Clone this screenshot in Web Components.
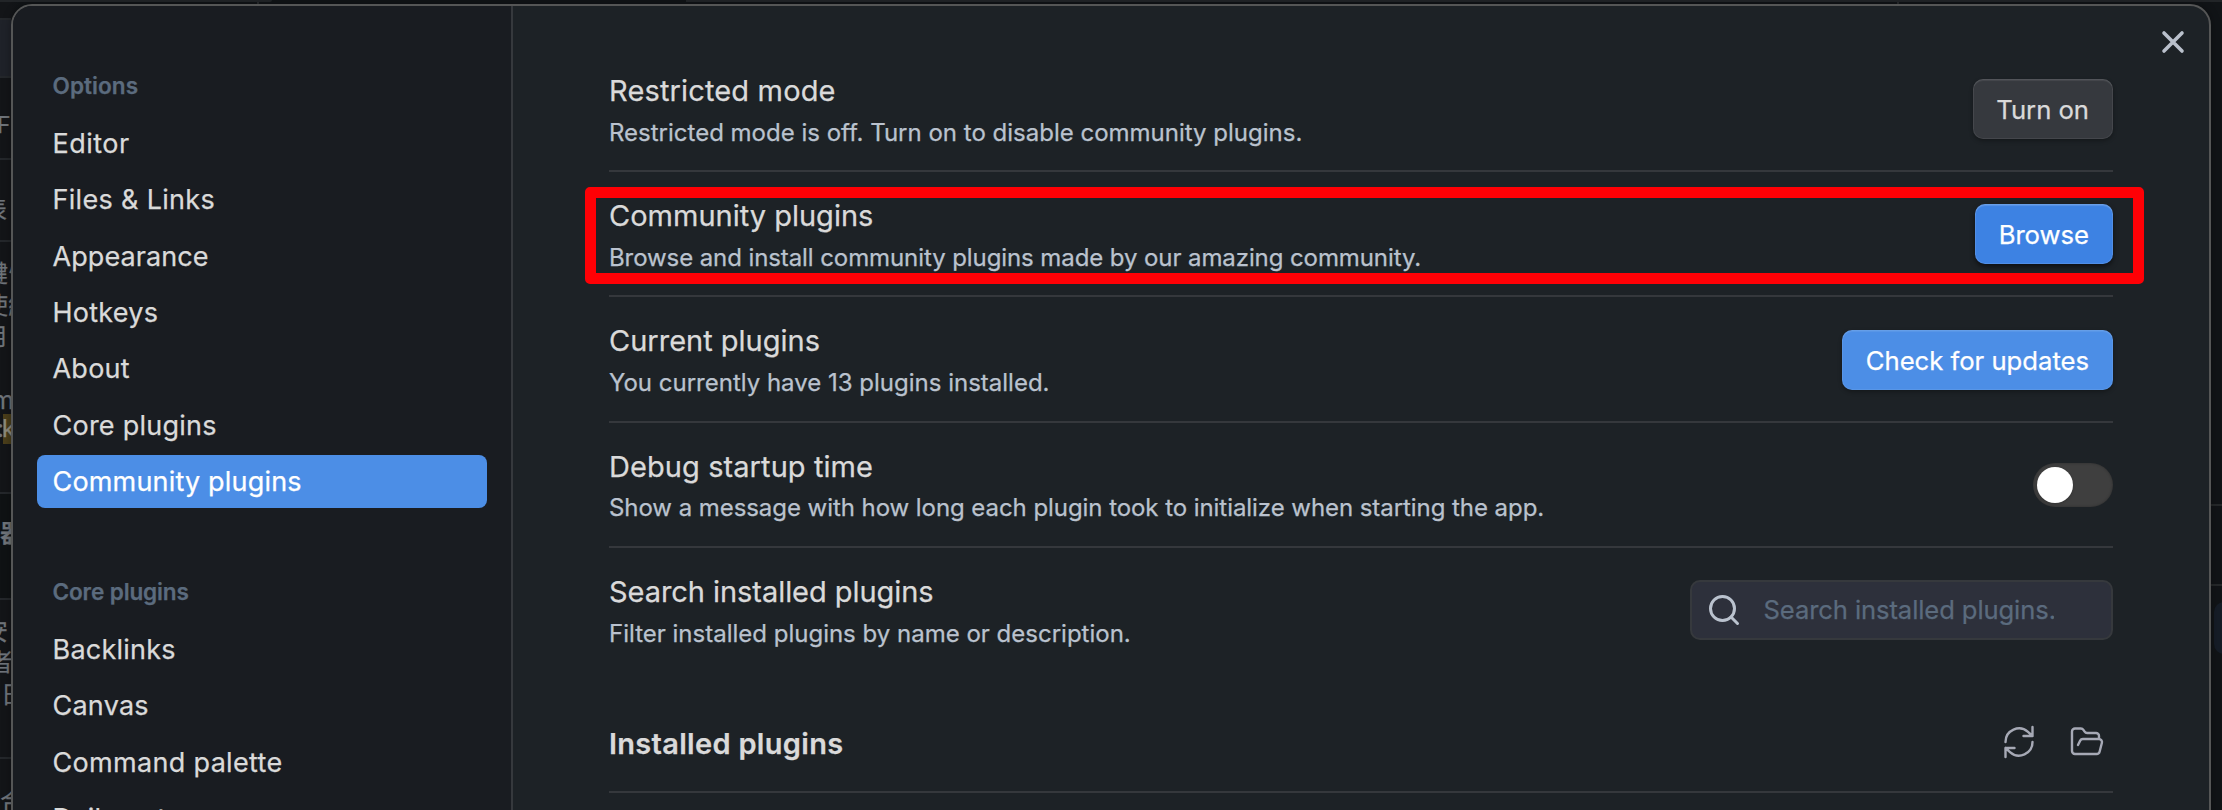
<!DOCTYPE html>
<html lang="en">
<head>
<meta charset="utf-8">
<title>Settings</title>
<style>
html,body{margin:0;height:810px;overflow:hidden;background:#111417}
body{font-family:Inter,"Noto Sans CJK TC",sans-serif;color:#dadada;-webkit-text-stroke:.25px currentColor}
</style>
</head>
<body>
<app-shell>
  <app-backdrop slot="backdrop"></app-backdrop>
  <settings-modal>
    <nav-group slot="nav" label="Options" style="--hls:.05px">
      <nav-item style="--ls:.5px">Editor</nav-item>
      <nav-item style="--ls:.32px">Files &amp; Links</nav-item>
      <nav-item style="--ls:.08px">Appearance</nav-item>
      <nav-item>Hotkeys</nav-item>
      <nav-item>About</nav-item>
      <nav-item>Core plugins</nav-item>
      <nav-item active style="--ls:.18px">Community plugins</nav-item>
    </nav-group>
    <nav-group slot="nav" label="Core plugins">
      <nav-item>Backlinks</nav-item>
      <nav-item>Canvas</nav-item>
      <nav-item style="--ls:.32px">Command palette</nav-item>
      <nav-item>Daily notes</nav-item>
    </nav-group>

    <setting-row label="Restricted mode" style="--tls:.15px;--dls:0px" desc="Restricted mode is off. Turn on to disable community plugins."><ui-button>Turn on</ui-button></setting-row>
    <setting-row marked label="Community plugins" style="--dls:-.09px" desc="Browse and install community plugins made by our amazing community."><ui-button kind="hover">Browse</ui-button></setting-row>
    <setting-row label="Current plugins" style="--dls:0px" desc="You currently have 13 plugins installed."><ui-button kind="cta">Check for updates</ui-button></setting-row>
    <setting-row label="Debug startup time" style="--tls:.08px;--dls:-.06px" desc="Show a message with how long each plugin took to initialize when starting the app."><ui-toggle></ui-toggle></setting-row>
    <setting-row label="Search installed plugins" style="--tls:-.05px;--dls:0px" desc="Filter installed plugins by name or description."><search-field>Search installed plugins...</search-field></setting-row>
    <section-heading label="Installed plugins"><ui-icon name="refresh"></ui-icon><ui-icon name="folder"></ui-icon></section-heading>
  </settings-modal>
</app-shell>

<script>
const define = (name, html, setup) => {
  const tpl = document.createElement('template');
  tpl.innerHTML = html;
  customElements.define(name, class extends HTMLElement {
    constructor() {
      super();
      this.attachShadow({mode: 'open'}).append(tpl.content.cloneNode(true));
      if (setup) setup(this, this.shadowRoot);
    }
  });
};
const fillLabels = (el, root) => {
  for (const key of ['label', 'desc']) {
    const node = root.querySelector('.' + key);
    if (node) node.textContent = el.getAttribute(key);
  }
};

define('app-shell', `<style>
:host{display:block;position:relative;width:2222px;height:810px;overflow:hidden;background:#111417}
</style><slot name="backdrop"></slot><slot></slot>`);

// Dimmed editor window that peeks out around the dialog
define('app-backdrop', `<style>
:host{position:absolute;inset:0;display:block;background:linear-gradient(90deg,#131518 0 11px,#111417 20px)}
i{position:absolute;display:block}
.l{height:2px;left:0;width:11px;background:#24272b}
.r{height:2px;left:2211px;width:11px;background:#25282a}
.clip{position:absolute;left:0;top:0;width:11px;height:810px;overflow:hidden;color:#6f747a;font-size:24px;line-height:30px}
.clip span{position:absolute;white-space:nowrap}
</style>
<i style="left:0;top:0;width:272px;height:2px;background:#222528;border-radius:0 0 10px 0"></i>
<i style="left:686px;top:0;width:1536px;height:2px;background:#222528"></i>
<i style="left:257px;top:2px;width:2px;height:2px;background:#282b2e"></i>
<i style="left:1897px;top:2px;width:2px;height:2px;background:#282b2e"></i>
<i style="left:0;top:18px;width:11px;height:58px;background:#1f2229"></i>
<i class="l" style="top:18px"></i><i class="l" style="top:76px"></i><i class="l" style="top:158px"></i><i class="l" style="top:240px"></i>
<i class="l" style="top:492px"></i><i class="l" style="top:598px"></i><i class="l" style="top:757px"></i>
<i style="left:0;top:494px;width:11px;height:104px;background:#0f1214"></i>
<i class="r" style="top:504px"></i><i class="r" style="top:584px"></i>
<i style="left:2214px;top:602px;width:20px;height:52px;border-radius:10px;background:#161d27"></i>
<div class="clip">
<span style="left:-3px;top:110px;font-size:23px">F</span>
<span style="right:4px;top:195px">表</span>
<span style="left:-16px;top:259px">鍵忄</span>
<span style="left:-16px;top:291px">使紀</span>
<span style="right:4px;top:322px">用</span>
<span style="left:-8px;top:385px;font-size:25px">m</span>
<i style="left:3px;top:414px;width:8px;height:30px;background:#4a3e1a"></i>
<span style="left:-3px;top:414px">:</span><span style="left:2px;top:414px;color:#8e8b7e">k</span>
<span style="left:0;top:519px;font-weight:700">器</span>
<span style="right:3px;top:617px">安</span>
<span style="left:-11px;top:648px">者</span>
<span style="left:1px;top:680px">日</span>
<span style="left:0;top:787px;font-size:26px">合</span>
</div>`);

define('settings-modal', `<style>
:host{position:absolute;left:11px;top:4px;width:2200px;height:1200px;box-sizing:border-box;border:2px solid #555656;border-radius:21px;overflow:hidden;display:flex;background:#1d2226;box-shadow:0 0 8px rgba(0,0,0,.35)}
nav{flex:none;box-sizing:border-box;width:500px;border-right:2px solid #36393d;background:#191c21;padding:62px 24px 0;display:flex;flex-direction:column;gap:62.8px}
main{flex:1;padding:39px 96px 0}
.close{position:absolute;right:18px;top:18px;color:#bac1cc}
</style><nav><slot name="nav"></slot></nav><main><slot></slot></main>
<ui-icon class="close" name="close"></ui-icon>`);

define('nav-group', `<style>
:host{display:block}
.label{height:36px;line-height:36px;margin:0 0 13px;padding-left:15.5px;font-size:22.6px;font-weight:600;letter-spacing:var(--hls,-.15px);color:#5b6b7e}
</style><div class="label"></div><slot></slot>`, fillLabels);

define('nav-item', `<style>
:host{display:block;box-sizing:border-box;height:53px;line-height:54px;margin-bottom:3.33px;padding-left:15.5px;border-radius:8px;font-size:27px;letter-spacing:var(--ls,.24px);color:#dadada;white-space:nowrap}
:host([active]){background:#4c8ee6;color:#fff}
</style><slot></slot>`);

define('setting-row', `<style>
:host{display:flex;position:relative;align-items:center;justify-content:space-between;padding:24px 0 20.9px;border-top:2px solid #35383c}
:host(:first-of-type){border-top-color:transparent}
.label{font-size:29px;line-height:39px;letter-spacing:var(--tls,0px);color:#dadada}
.desc{margin-top:5.9px;margin-bottom:-.6px;font-size:24px;line-height:34px;letter-spacing:var(--dls,-.04px);color:#bac2ce}
.text{white-space:nowrap}
.ctl{display:flex;margin-bottom:2px}
.mark{display:none;position:absolute;left:-24px;right:-31px;top:15px;height:97px;box-sizing:border-box;border:11px solid #ff0005;border-radius:5px}
:host([marked]) .mark{display:block}
</style><div class="text"><div class="label"></div><div class="desc"></div></div><div class="ctl"><slot></slot></div><div class="mark"></div>`, fillLabels);

define('section-heading', `<style>
:host{display:flex;align-items:center;justify-content:space-between;margin-top:53px;padding-bottom:28.5px;border-bottom:2px solid #35383c}
.label{font-size:29px;line-height:39px;font-weight:600;letter-spacing:.3px;color:#dadada}
.ctl{display:flex;gap:32px;padding-right:8px;margin-bottom:2px;color:#a6a9b5}
</style><div class="label"></div><div class="ctl"><slot></slot></div>`, fillLabels);

define('ui-button', `<style>
:host{display:block;box-sizing:border-box;height:60px;line-height:61px;padding:0 24px 0 23.5px;border-radius:10px;font-size:25.7px;letter-spacing:-.03px;color:#dadada;background:#36393e;box-shadow:inset 0 2px 1px rgba(255,255,255,.08),inset 0 0 0 1px rgba(255,255,255,.07),0 2px 4px rgba(0,0,0,.3)}
:host([kind]){color:#fff;background:#4c8ee6}
:host([kind=hover]){background:#3d82e3;box-shadow:inset 0 2px 1px rgba(255,255,255,.14),inset 0 0 0 1px rgba(255,255,255,.1),0 3px 5px rgba(0,0,0,.5)}
</style><slot></slot>`);

define('ui-toggle', `<style>
:host{display:block;box-sizing:border-box;width:80px;height:44px;padding:4px;border-radius:22px;background:#3f3f3f;box-shadow:inset 0 0 3px rgba(0,0,0,.3)}
b{display:block;width:36px;height:36px;border-radius:50%;background:#fff;box-shadow:0 1px 3px rgba(0,0,0,.2)}
</style><b></b>`);

define('search-field', `<style>
:host{display:flex;align-items:center;box-sizing:border-box;width:423px;height:60px;padding-left:14px;border:2px solid #36393d;border-radius:10px;background:#2d303b}
ui-icon{color:#bac2ce}
span{width:290px;margin-left:21.5px;overflow:hidden;white-space:nowrap;font-size:25.6px;line-height:41px;letter-spacing:-.1px;color:#5b6b7e}
</style><ui-icon name="search"></ui-icon><span><slot></slot></span>`);

const ICONS = {
  close: ['2.4', '<path d="M18 6 6 18M6 6l12 12"/>'],
  search: ['2', '<circle cx="11" cy="11" r="8"/><path d="m21 21-4.3-4.3"/>'],
  refresh: ['1.6', '<path d="M21 2v6h-6M3 12a9 9 0 0 1 15-6.7L21 8M3 22v-6h6M21 12a9 9 0 0 1-15 6.7L3 16"/>'],
  folder: ['1.6', '<path d="m6 14 1.45-2.9A2 2 0 0 1 9.24 10H20a2 2 0 0 1 1.94 2.5l-1.55 6a2 2 0 0 1-1.94 1.5H4a2 2 0 0 1-2-2V5c0-1.1.9-2 2-2h3.93a2 2 0 0 1 1.66.9l.82 1.2a2 2 0 0 0 1.66.9H18a2 2 0 0 1 2 2v2"/>']
};
define('ui-icon', `<style>
:host{display:block;flex:none;width:36px;height:36px}
svg{display:block;width:36px;height:36px;fill:none;stroke:currentColor;stroke-linecap:round;stroke-linejoin:round}
</style><svg viewBox="0 0 24 24"></svg>`, (el, root) => {
  const icon = ICONS[el.getAttribute('name')];
  if (!icon) return;
  const svg = root.querySelector('svg');
  svg.setAttribute('stroke-width', icon[0]);
  svg.innerHTML = icon[1];
});
</script>
</body>
</html>
